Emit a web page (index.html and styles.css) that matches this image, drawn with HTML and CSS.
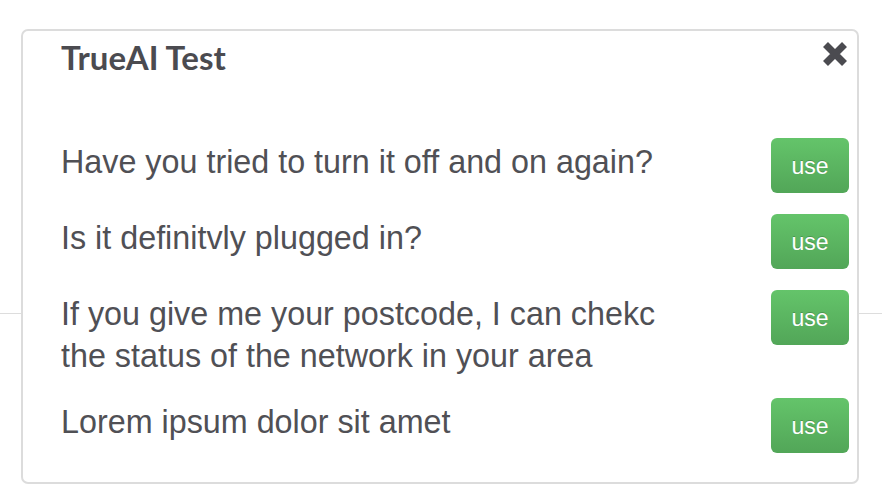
FILE: index.html
```html
<!DOCTYPE html>
<html lang="en">
<head>
<meta charset="utf-8">
<title>TrueAI Test</title>
<link rel="stylesheet" href="styles.css">
</head>
<body>
<div class="card">
  <div class="card-header">
    <h1 class="title">TrueAI Test</h1>
    <button class="close" aria-label="Close">
      <svg viewBox="0 0 26 26" width="26" height="26"><path d="M3.5 3.5 L22.5 22.5 M22.5 3.5 L3.5 22.5" stroke="#4b4b50" stroke-width="7" fill="none"/></svg>
    </button>
  </div>
  <ul class="suggestions">
    <li class="row"><span class="text">Have you tried to turn it off and on again?</span><button class="use">use</button></li>
    <li class="row"><span class="text">Is it definitvly plugged in?</span><button class="use">use</button></li>
    <li class="row"><span class="text">If you give me your postcode, I can chekc the status of the network in your area</span><button class="use">use</button></li>
    <li class="row"><span class="text">Lorem ipsum dolor sit amet</span><button class="use">use</button></li>
  </ul>
</div>
</body>
</html>
```
FILE: styles.css
```css
html, body {
  margin: 0;
  padding: 0;
}
body {
  width: 882px;
  height: 502px;
  overflow: hidden;
  background: #fff linear-gradient(#dddddd, #dddddd) 0 313px / 100% 1px no-repeat;
  font-family: "Liberation Sans", Arial, sans-serif;
  color: #505055;
  padding-top: 29px;
  box-sizing: border-box;
}
.card {
  margin-left: 21px;
  width: 838px;
  height: 455px;
  box-sizing: border-box;
  border: 2px solid #dcdcdc;
  border-radius: 7px;
  background: #fff;
  padding-top: 6px;
}
.card-header {
  display: flex;
  justify-content: space-between;
  align-items: flex-start;
  height: 40px;
  padding: 0 9px 0 38px;
}
.title {
  margin: 0;
  font-family: Lato, "Liberation Sans", sans-serif;
  font-weight: 700;
  font-size: 33px;
  line-height: 40px;
  color: #4b4b50;
}
.close {
  margin-top: 4px;
  padding: 0;
  border: 0;
  background: none;
  width: 26px;
  height: 26px;
  display: block;
}
.close svg {
  display: block;
}
.suggestions {
  list-style: none;
  margin: 61px 0 0;
  padding: 0 8px 0 38px;
}
.row {
  display: flex;
  justify-content: space-between;
  align-items: flex-start;
  margin-bottom: 21px;
}
.text {
  width: 620px;
  padding-top: 3px;
  font-size: 32.3px;
  line-height: 42px;
}
.use {
  width: 78px;
  height: 55px;
  padding: 0;
  border: 0;
  border-radius: 6px;
  background: linear-gradient(#64c46a, #52a658);
  color: #fff;
  font-family: "Liberation Sans", Arial, sans-serif;
  font-size: 23px;
  line-height: 57px;
  text-shadow: 0 -1px 0 rgba(0, 0, 0, 0.2);
}
```
